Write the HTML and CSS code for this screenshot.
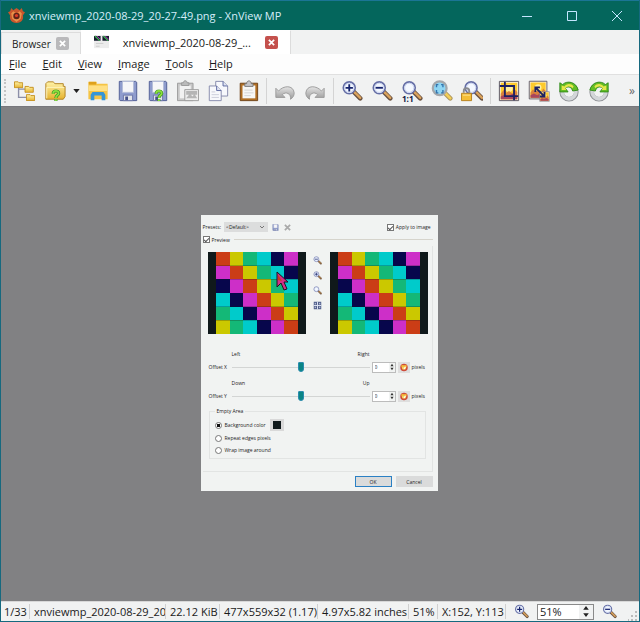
FILE: index.html
```html
<!DOCTYPE html>
<html lang="en">
<head>
    <meta charset="UTF-8">
    <meta name="viewport" content="width=device-width, initial-scale=1.0">
    <title>xnviewmp_2020-08-29_20-27-49.png - XnView MP</title>
    <link rel="stylesheet" href="styles.css">
</head>
<body>
    <!-- shared icon shapes -->
    <svg class="defs" width="0" height="0" aria-hidden="true">
        <defs>
            <linearGradient id="gold" x1="0" y1="0" x2="0" y2="1">
                <stop offset="0" stop-color="#fff3a8"/>
                <stop offset="1" stop-color="#e6b22e"/>
            </linearGradient>
            <linearGradient id="steel" x1="0" y1="0" x2="0" y2="1">
                <stop offset="0" stop-color="#e4e4e4"/>
                <stop offset="1" stop-color="#9a9a9a"/>
            </linearGradient>
        </defs>
        <symbol id="lens" viewBox="0 0 24 24">
            <path d="M14 13l7 7" stroke="#6b5240" stroke-width="5" stroke-linecap="round"/>
            <path d="M15 13.500l6 6" stroke="#dba35c" stroke-width="2.500" stroke-linecap="round"/>
            <circle cx="9" cy="8.500" r="6.500" fill="#f4f8ff" stroke="#666fa6" stroke-width="1.800"/>
            <circle cx="9" cy="8.500" r="5" fill="none" stroke="#c5d0ee"/>
        </symbol>
        <symbol id="zoom-in" viewBox="0 0 24 24">
            <use href="#lens"/>
            <path d="M5 8.500h8M9 4.500v8" stroke="#17246e" stroke-width="2"/>
        </symbol>
        <symbol id="zoom-out" viewBox="0 0 24 24">
            <use href="#lens"/>
            <path d="M5 8.500h8" stroke="#17246e" stroke-width="2"/>
        </symbol>
        <symbol id="floppy" viewBox="0 0 24 24">
            <path d="M2.500 1.500h18l1 1v20h-18l-1-1z" fill="#8f9ccd" stroke="#4d5a92"/>
            <path d="M6 1.500h12v12H6z" fill="#f6f6f8" stroke="#b4bcd8"/>
            <path d="M7 16.500h10v6H7z" fill="#e3e5ea" stroke="#6873a6"/>
            <path d="M9 18h3v4H9z" fill="#46518a"/>
        </symbol>
        <symbol id="question" viewBox="0 0 12 14">
            <path d="M3 5c0-4 6-4 6-.5C9 7 6 6.500 6 9.500M6 11v2" fill="none" stroke="#3a8f24" stroke-width="3.400"/>
            <path d="M3 5c0-4 6-4 6-.5C9 7 6 6.500 6 9.500M6 11v2" fill="none" stroke="#8be03c" stroke-width="2"/>
        </symbol>
        <symbol id="picture" viewBox="0 0 24 24">
            <path d="M1.500 1.500h21v21h-21z" fill="#f8f0e0" stroke="#55505c"/>
            <path d="M3 3h18v18H3z" fill="#fdca2c"/>
            <circle cx="12" cy="9" r="4" fill="#fff0a0"/>
            <path d="M3 15l3-4 3 3 3-2 4 3 2-5 3 3v8H3z" fill="#d9803c"/>
            <path d="M3 18l4-2 4 2 5-3 5 3v3H3z" fill="#a8455e"/>
        </symbol>
        <symbol id="rotate" viewBox="0 0 24 24">
            <circle cx="12" cy="13" r="8" fill="none" stroke="#8e9195" stroke-width="5"/>
            <circle cx="12" cy="13" r="7.500" fill="none" stroke="#d3d6d9" stroke-width="4"/>
            <path d="M22 11C20 2 10 0 5 5L2 3v10h9L8 9c3-3 7-1 8 3z" fill="#64bd24" stroke="#2f8a19"/>
            <path d="M17 7C14 3 9 4 7 7L4 6v5h5L8 9c3-3 6-2 8 0z" fill="#e5e54a"/>
        </symbol>
        <symbol id="undo" viewBox="0 0 24 24">
            <path d="M2 9l3 3c5-6 16-7 17 2 0 3-1 5-4 7 1-6-5-9-9-5l3 3H2z" fill="url(#steel)" stroke="#999"/>
        </symbol>
        <symbol id="mini-folder" viewBox="0 0 10 8">
            <path d="M.5 1h4l1 1h4v5.500h-9z" fill="url(#gold)" stroke="#c38c19"/>
        </symbol>
        <symbol id="refresh" viewBox="0 0 12 12">
            <circle cx="6" cy="6" r="4" fill="#f6d25c" stroke="#cf4b3a" stroke-width="2"/>
            <path d="M2 5l1-3 3 2 3-2 1 3z" fill="#f2b632"/>
            <path d="M6 8l2-3" stroke="#fff" stroke-width="1.500"/>
        </symbol>
        <symbol id="strip" viewBox="0 0 11 1">
            <path d="M0 0h1v1H0zM6 0h1v1H6z" fill="#cbc800"/>
            <path d="M1 0h1v1H1zM7 0h1v1H7z" fill="#14b877"/>
            <path d="M2 0h1v1H2zM8 0h1v1H8z" fill="#00cbcb"/>
            <path d="M3 0h1v1H3zM9 0h1v1H9z" fill="#07064c"/>
            <path d="M4 0h1v1H4zM10 0h1v1h-1z" fill="#cd2fc8"/>
            <path d="M5 0h1v1H5z" fill="#cb3d16"/>
        </symbol>
        <symbol id="checker" viewBox="0 0 6 6">
            <use href="#strip" x="-5" y="0" width="11" height="1"/>
            <use href="#strip" x="-4" y="1" width="11" height="1"/>
            <use href="#strip" x="-3" y="2" width="11" height="1"/>
            <use href="#strip" x="-2" y="3" width="11" height="1"/>
            <use href="#strip" x="-1" y="4" width="11" height="1"/>
            <use href="#strip" x="0" y="5" width="11" height="1"/>
        </symbol>
    </svg>

    <div class="window">
        <header class="titlebar">
            <svg class="app-icon" viewBox="0 0 16 16">
                <path d="M8 15C3 15 1 11 2 8L0 5l2-1 1-3 2 2 3-2 3 2 2-2 1 3 2 1-2 3c1 3-1 7-6 7z" fill="#c9562c"/>
                <path d="M3 6l2-2 3 2 3-2 2 2-1 5-4 3-4-3z" fill="#e8914a"/>
                <circle cx="8" cy="8.500" r="3" fill="#5e2118"/>
                <circle cx="8" cy="8" r="1.500" fill="#e03c28"/>
            </svg>
            <h1>xnviewmp_2020-08-29_20-27-49.png - XnView MP</h1>
            <button class="win-btn" aria-label="Minimize"><svg viewBox="0 0 12 12"><path d="M1 6.500h10"/></svg></button>
            <button class="win-btn" aria-label="Maximize"><svg viewBox="0 0 12 12"><path d="M1.500 1.500h9v9h-9z"/></svg></button>
            <button class="win-btn" aria-label="Close"><svg viewBox="0 0 12 12"><path d="M1 1l10 10M11 1L1 11"/></svg></button>
        </header>

        <div class="tabs">
            <div class="tab">
                <span>Browser</span>
                <button class="tab-close" aria-label="Close Browser"><svg viewBox="0 0 8 8"><path d="M1 1l6 6M7 1L1 7"/></svg></button>
            </div>
            <div class="tab active">
                <svg class="thumb" viewBox="0 0 16 16">
                    <path d="M0 0h16v14H0z" fill="#ececec"/>
                    <path d="M0 1h7v5H0zM9 1h7v5H9z" fill="#151a2c"/>
                    <path d="M1 1l5 5M10 1l5 5" stroke="#3fae54" stroke-width="1.500"/>
                    <path d="M3 1l4 4M12 1l4 4" stroke="#b53cc0"/>
                    <path d="M2 9h8M2 12h4" stroke="#ccc"/>
                </svg>
                <span class="tab-name">xnviewmp_2020-08-29_...</span>
                <button class="tab-close red" aria-label="Close image"><svg viewBox="0 0 8 8"><path d="M1 1l6 6M7 1L1 7"/></svg></button>
            </div>
        </div>

        <nav class="menu">
            <a href="#"><u>F</u>ile</a>
            <a href="#"><u>E</u>dit</a>
            <a href="#"><u>V</u>iew</a>
            <a href="#"><u>I</u>mage</a>
            <a href="#"><u>T</u>ools</a>
            <a href="#"><u>H</u>elp</a>
        </nav>

        <div class="toolbar">
            <span class="grip"></span>
            <button class="tool" aria-label="Browser"><svg viewBox="0 0 24 24">
                <path d="M5 8v11h10M5 10h8" fill="none" stroke="#8c8fa8" stroke-width="1.500"/>
                <use href="#mini-folder" x="0" y="1" width="10" height="8"/>
                <use href="#mini-folder" x="11" y="6" width="11" height="8"/>
                <use href="#mini-folder" x="13" y="15" width="10" height="8"/>
            </svg></button>
            <button class="tool" aria-label="Open"><svg viewBox="0 0 24 24">
                <path d="M2 21V4l2-2h6l2 2h9v3h2v11l-2 3z" fill="url(#gold)" stroke="#b07f1c"/>
                <path d="M3 20V8h19" fill="none" stroke="#fff6c4"/>
                <use href="#question" x="7" y="10" width="12" height="14"/>
            </svg></button>
            <button class="drop" aria-label="Recent files"><svg viewBox="0 0 8 5"><path d="M0 0h8L4 5z" fill="#222"/></svg></button>
            <button class="tool" aria-label="Explorer"><svg viewBox="0 0 24 24">
                <path d="M1.500 2h9v2h12v17h-21z" fill="#f5c445"/>
                <path d="M2 2h8v3H2z" fill="#dea11c"/>
                <path d="M2 6h20v6H2z" fill="#ffe084"/>
                <path d="M4 22v-6l2-3h12l2 3v6h-4v-5H8v5z" fill="#3595d6"/>
            </svg></button>
            <button class="tool" aria-label="Save"><svg viewBox="0 0 24 24"><use href="#floppy"/></svg></button>
            <button class="tool" aria-label="Save as"><svg viewBox="0 0 24 24">
                <use href="#floppy"/>
                <use href="#question" x="7" y="10" width="12" height="14"/>
            </svg></button>
            <button class="tool" aria-label="Paste"><svg viewBox="0 0 24 24">
                <path d="M.5 3.500h17v19H.5z" fill="#c8c8c8" stroke="#999"/>
                <path d="M3 6h12v14H3z" fill="#f2f2f2"/>
                <path d="M5 6V3h2c0-3 4-3 4 0h2v3z" fill="#bbb" stroke="#999"/>
                <path d="M8.500 10.500h15v12h-15z" fill="#eee" stroke="#999"/>
                <path d="M10 20l4-5 3 3 2-3 3 5zM10 12h12v4H10z" fill="#b5b5b5"/>
            </svg></button>
            <button class="tool" aria-label="Copy"><svg viewBox="0 0 24 24">
                <path d="M9.500 1.500h8l5 5v11h-13z" fill="#f7f8fc" stroke="#8287aa"/>
                <path d="M17.500 1.500v5h5" fill="#dfe3f2" stroke="#55639d"/>
                <path d="M2.500 6.500h8l5 5v11h-13z" fill="#f7f8fc" stroke="#8287aa"/>
                <path d="M10.500 6.500v5h5" fill="#dfe3f2" stroke="#55639d"/>
                <path d="M5 13h4M5 16h8M5 19h8" stroke="#c8cbd8"/>
            </svg></button>
            <button class="tool" aria-label="Clipboard"><svg viewBox="0 0 24 24">
                <path d="M3.500 3.500h19v19h-19z" fill="#b06f24" stroke="#6b3f16"/>
                <path d="M6 6h14v14H6z" fill="#f7f7f5"/>
                <path d="M8.500 7V4h2c0-4 5-4 5 0h2v3z" fill="#c4c4c8" stroke="#777"/>
                <path d="M8 11h9M8 14h10M8 17h7" stroke="#d2d2d2"/>
            </svg></button>
            <span class="sep"></span>
            <button class="tool" aria-label="Undo"><svg viewBox="0 0 24 24"><use href="#undo"/></svg></button>
            <button class="tool" aria-label="Redo"><svg viewBox="0 0 24 24"><use href="#undo" transform="translate(24 0) scale(-1 1)"/></svg></button>
            <span class="sep"></span>
            <button class="tool" aria-label="Zoom in"><svg viewBox="0 0 24 24"><use href="#zoom-in"/></svg></button>
            <button class="tool" aria-label="Zoom out"><svg viewBox="0 0 24 24"><use href="#zoom-out"/></svg></button>
            <button class="tool" aria-label="Zoom 100%"><svg viewBox="0 0 24 24">
                <use href="#lens"/>
                <text x="1" y="24" class="ratio">1:1</text>
            </svg></button>
            <button class="tool" aria-label="Fit image"><svg viewBox="0 0 24 24">
                <path d="M15 14l6 6" stroke="#a9925c" stroke-width="5" stroke-linecap="round"/>
                <path d="M15 14l6 6" stroke="#f2ce58" stroke-width="3" stroke-linecap="round"/>
                <circle cx="9.500" cy="9" r="7.500" fill="#8fd6f4" stroke="#a4a8ac" stroke-width="2.500"/>
                <path d="M6 8V5h2M11 5h2v3M13 11v3h-2M8 14H6v-3" fill="none" stroke="#3475ae" stroke-width="1.500"/>
            </svg></button>
            <button class="tool" aria-label="Lock zoom"><svg viewBox="0 0 24 24">
                <use href="#lens" x="2" y="0"/>
                <path d="M3 14v-2c0-4 6-4 6 0v2" fill="none" stroke="#8b8c90" stroke-width="2"/>
                <path d="M.5 14.500h11v8H.5z" fill="#f4bd36" stroke="#b27c18"/>
                <path d="M2 16.500h8" stroke="#ffe69a"/>
            </svg></button>
            <span class="sep"></span>
            <button class="tool" aria-label="Crop"><svg viewBox="0 0 24 24">
                <use href="#picture"/>
                <path d="M7.500 2v15.500H22M2 6.500h15.500V22" fill="none" stroke="#1d2163" stroke-width="2"/>
            </svg></button>
            <button class="tool" aria-label="Resize"><svg viewBox="0 0 24 24">
                <use href="#picture" x="0" y="0" width="22" height="22"/>
                <use href="#picture" x="12" y="12" width="12" height="12"/>
                <path d="M9 9l8 8M8 13V8h5M18 13v5h-5" fill="none" stroke="#1d2163" stroke-width="2"/>
            </svg></button>
            <button class="tool" aria-label="Rotate left"><svg viewBox="0 0 24 24"><use href="#rotate"/></svg></button>
            <button class="tool" aria-label="Rotate right"><svg viewBox="0 0 24 24"><use href="#rotate" transform="translate(24 0) scale(-1 1)"/></svg></button>
            <button class="more" aria-label="More tools">»</button>
        </div>

        <main class="canvas">
            <section class="dialog">
                <div class="presets">
                    <label for="preset">Presets:</label>
                    <div class="select">
                        <select id="preset"><option>&lt;Default&gt;</option></select>
                        <svg viewBox="0 0 6 4"><path d="M1 1l2 2 2-2"/></svg>
                    </div>
                    <svg class="mini" viewBox="0 0 24 24"><use href="#floppy"/></svg>
                    <svg class="mini" viewBox="0 0 8 8"><path d="M1 1l6 6M7 1L1 7" stroke="#aaa" stroke-width="2"/></svg>
                    <label class="apply"><input type="checkbox" checked> Apply to image</label>
                </div>
                <div class="preview-head"><label><input type="checkbox" checked> Preview</label></div>
                <div class="frame">
                    <div class="previews">
                        <div class="preview">
                            <svg viewBox="0 0 6 6"><use href="#checker"/></svg>
                            <svg class="pointer" viewBox="0 0 12 20"><path d="M1 1v15l4-4 3 7 3-1-3-7h4z" fill="#d32f86" stroke="#1c1420"/><path d="M2 4v5l4 1z" fill="#cb3d16"/></svg>
                        </div>
                        <div class="preview-tools">
                            <button aria-label="Preview zoom out"><svg viewBox="0 0 24 24"><use href="#zoom-out"/></svg></button>
                            <button aria-label="Preview zoom in"><svg viewBox="0 0 24 24"><use href="#zoom-in"/></svg></button>
                            <button aria-label="Preview zoom 100%"><svg viewBox="0 0 24 24"><use href="#lens"/></svg></button>
                            <button aria-label="Preview fit"><svg viewBox="0 0 24 24"><path d="M2 2h20v20H2z" fill="#53608c"/><path d="M12 2v20M2 12h20M6 5v4M18 5v4M6 15v4M18 15v4" stroke="#dfe4f4" stroke-width="2.500"/></svg></button>
                        </div>
                        <div class="preview"><svg viewBox="0 0 6 6"><use href="#checker"/></svg></div>
                    </div>

                    <div class="offset">
                        <div class="ends"><span>Left</span><span>Right</span></div>
                        <label for="offset-x">Offset X</label>
                        <input class="slider" id="offset-x" type="range" min="-100" max="100" value="0">
                        <div class="spin"><input type="text" value="0" aria-label="Offset X pixels"><svg viewBox="0 0 6 10"><path d="M1 4l2-3 2 3zM1 6l2 3 2-3z"/></svg></div>
                        <button class="reset" aria-label="Reset X"><svg viewBox="0 0 12 12"><use href="#refresh"/></svg></button>
                        <span>pixels</span>
                    </div>
                    <div class="offset">
                        <div class="ends"><span>Down</span><span>Up</span></div>
                        <label for="offset-y">Offset Y</label>
                        <input class="slider" id="offset-y" type="range" min="-100" max="100" value="0">
                        <div class="spin"><input type="text" value="0" aria-label="Offset Y pixels"><svg viewBox="0 0 6 10"><path d="M1 4l2-3 2 3zM1 6l2 3 2-3z"/></svg></div>
                        <button class="reset" aria-label="Reset Y"><svg viewBox="0 0 12 12"><use href="#refresh"/></svg></button>
                        <span>pixels</span>
                    </div>

                    <fieldset class="empty-area">
                        <legend>Empty Area</legend>
                        <div class="choice first">
                            <label><input type="radio" name="area" checked> Background color</label>
                            <button class="swatch" aria-label="Pick color"></button>
                        </div>
                        <div class="choice"><label><input type="radio" name="area"> Repeat edges pixels</label></div>
                        <div class="choice"><label><input type="radio" name="area"> Wrap image around</label></div>
                    </fieldset>
                </div>
                <div class="actions">
                    <button class="ok">OK</button>
                    <button>Cancel</button>
                </div>
            </section>
        </main>

        <footer class="status">
            <span class="cell index">1/33</span>
            <span class="cell name">xnviewmp_2020-08-29_20</span>
            <span class="cell size">22.12 KiB</span>
            <span class="cell dims">477x559x32 (1.17)</span>
            <span class="cell inches">4.97x5.82 inches</span>
            <span class="cell percent">51%</span>
            <span class="cell coords">X:152, Y:113</span>
            <button class="zoom-btn" aria-label="Zoom in"><svg viewBox="0 0 24 24"><use href="#zoom-in"/></svg></button>
            <div class="zoom-box">
                <input type="text" value="51%" aria-label="Zoom">
                <svg viewBox="0 0 12 14"><path d="M3 5l3-4 3 4zM3 9l3 4 3-4z"/></svg>
            </div>
            <button class="zoom-btn" aria-label="Zoom out"><svg viewBox="0 0 24 24"><use href="#zoom-out"/></svg></button>
            <svg class="resize" viewBox="0 0 10 10"><path d="M7 0h2v2H7zM7 4h2v2H7zM7 8h2v2H7zM3 4h2v2H3zM3 8h2v2H3zM0 8h1v2H0z" fill="#bbb"/></svg>
        </footer>
    </div>
</body>
</html>
```
FILE: styles.css
```css
* {
    box-sizing: border-box;
}
body {
    margin: 0;
    font-family: "Open Sans", "Noto Sans", sans-serif;
    font-size: 11px;
    color: #1a1a1a;
}
button, input, select {
    font: inherit;
    color: inherit;
    margin: 0;
    padding: 0;
    border: none;
    background: none;
}
svg {
    display: block;
    fill: none;
}
.defs {
    position: absolute;
}
.window {
    display: flex;
    flex-direction: column;
    min-height: 100vh;
    border: 1px solid #16697f;
    border-top: none;
    background: #f1f2f2;
}

/* title bar */
.titlebar {
    display: flex;
    align-items: center;
    height: 30px;
    padding-left: 7px;
    background: #04665c;
    border-top: 1px solid #1b7595;
    color: #d4edfa;
}
.app-icon {
    width: 17px;
    height: 17px;
    margin-right: 4px;
}
.titlebar h1 {
    flex: 1;
    margin: 0;
    font-size: 11px;
    font-weight: normal;
}
.win-btn {
    display: flex;
    justify-content: center;
    width: 45px;
}
.win-btn svg {
    width: 12px;
    height: 12px;
    stroke: #c4e6ff;
}

/* tabs */
.tabs {
    display: flex;
    align-items: flex-end;
    height: 24px;
}
.tab {
    display: flex;
    align-items: center;
    height: 22px;
    gap: 5px;
    padding: 0 11px 0 10px;
    border: 1px solid #dcdcdc;
    border-bottom: none;
    font-size: 10px;
}
.tab.active {
    height: 24px;
    padding: 0 12px;
    gap: 14px;
    background: #fff;
    border-color: #fff #dcdcdc #fff #fff;
    font-size: 11px;
}
.tab-close {
    display: flex;
    align-items: center;
    justify-content: center;
    width: 13px;
    height: 13px;
    border-radius: 2px;
    background: #b9b9bb;
}
.tab-close.red {
    background: #c4514d;
}
.tab-close svg {
    width: 7px;
    height: 7px;
    stroke: #fff;
    stroke-width: 2;
}
.thumb {
    width: 15px;
    height: 15px;
}

/* menu */
.menu {
    display: flex;
    align-items: center;
    gap: 16px;
    height: 20px;
    padding: 0 0 2px 8px;
    background: #fdfdfd;
}
.menu a {
    color: inherit;
    text-decoration: none;
}

/* toolbar */
.toolbar {
    display: flex;
    align-items: center;
    height: 33px;
    padding-left: 3px;
    border-top: 1px solid #e0e0e0;
    border-bottom: 1px solid #77777c;
}
.grip {
    width: 6px;
    height: 24px;
    border-left: 2px dotted #c4c4c4;
}
.tool {
    display: flex;
    justify-content: center;
    width: 30px;
}
.tool svg {
    width: 22px;
    height: 22px;
}
.drop {
    display: flex;
    justify-content: center;
    width: 13px;
}
.drop svg {
    width: 7px;
    height: 4px;
}
.sep {
    width: 1px;
    height: 26px;
    margin: 0 3px;
    background: #d4d4d4;
}
.ratio {
    font: bold 9px "Open Sans", sans-serif;
    fill: #12183f;
}
.more {
    margin: 0 4px 0 auto;
    font-size: 12px;
    color: #666;
}

/* image area */
.canvas {
    flex: 1;
    display: flex;
    align-items: center;
    justify-content: center;
    padding: 0 2px 2px 0;
    background: #818183;
}
.dialog {
    width: 237px;
    padding: 6px 5px 4px 2px;
    background: #f1f3f2;
    font-size: 5px;
    line-height: 8px;
    color: #222;
}
.dialog label {
    display: flex;
    align-items: center;
    gap: 2px;
}
.presets {
    display: flex;
    align-items: center;
    gap: 3px;
    height: 12px;
}
.select {
    display: flex;
    align-items: center;
    width: 44px;
    height: 10px;
    padding: 0 3px 0 2px;
    background: #dcdddd;
}
.select select {
    appearance: none;
    flex: 1;
    height: 10px;
}
.select svg {
    width: 6px;
    height: 4px;
    stroke: #777;
}
.mini {
    width: 7px;
    height: 7px;
    margin-left: 1px;
}
.mini + .mini {
    margin-left: 2px;
}
.presets .apply {
    margin: 0 2px 0 auto;
}
.dialog input[type="checkbox"],
.dialog input[type="radio"] {
    appearance: none;
    width: 7px;
    height: 7px;
    border: 1px solid #777;
    background: #fff;
}
.dialog input[type="checkbox"]:checked::after {
    content: "";
    display: block;
    width: 2px;
    height: 4px;
    margin: 0 0 0 1px;
    border: solid #555;
    border-width: 0 1px 1px 0;
    transform: rotate(45deg);
}
.dialog input[type="radio"] {
    border-radius: 50%;
}
.dialog input[type="radio"]:checked {
    background: radial-gradient(#111 40%, #fff 50%);
}
.preview-head {
    display: flex;
    align-items: center;
    gap: 4px;
    height: 13px;
}
.preview-head::after {
    content: "";
    flex: 1;
    height: 1px;
    background: #d6d4cc;
}
.frame {
    padding: 6px 4px 12px 5px;
    border: 1px solid #e2e4e3;
    border-width: 0 1px 1px 0;
}
.previews {
    display: flex;
    justify-content: space-between;
}
.preview {
    position: relative;
    width: 98px;
    height: 82px;
    padding: 0 8px;
    background: #10191b;
}
.preview svg {
    width: 82px;
    height: 82px;
    shape-rendering: crispEdges;
}
.preview .pointer {
    position: absolute;
    left: 68px;
    top: 19px;
    width: 12px;
    height: 20px;
    shape-rendering: auto;
}
.preview-tools {
    display: flex;
    flex-direction: column;
    gap: 6px;
    padding-top: 4px;
}
.preview-tools svg {
    width: 9px;
    height: 9px;
}
.offset {
    display: grid;
    grid-template-columns: 21px 1fr 24px 12px 16px;
    column-gap: 2px;
    row-gap: 3px;
    align-items: center;
    padding-left: 1px;
}
.previews + .offset {
    margin-top: 16px;
}
.ends {
    grid-column: 2;
    display: flex;
    justify-content: space-between;
}
.offset label {
    grid-column: 1;
}
.offset + .offset {
    margin-top: 6px;
}
.slider {
    appearance: none;
    width: 100%;
    height: 12px;
    background: linear-gradient(#d3d5d4, #d3d5d4) center / 100% 1px no-repeat;
}
.slider::-webkit-slider-thumb {
    appearance: none;
    width: 6px;
    height: 10px;
    border: 1px solid #2b8cae;
    border-radius: 1px 1px 3px 3px;
    background: #0a8585;
}
.spin {
    display: flex;
    align-items: center;
    height: 11px;
    border: 1px solid #bcbcbc;
}
.spin input {
    flex: 1;
    width: 10px;
    padding-left: 2px;
    height: 9px;
    background: #fff;
}
.spin svg {
    width: 6px;
    height: 8px;
    fill: #333;
}
.reset {
    display: flex;
    justify-content: center;
    padding: 1px;
    background: #dedede;
}
.reset svg {
    width: 10px;
    height: 9px;
}
.empty-area {
    margin: 5px 2px 0 1px;
    padding: 3px 4px 2px 5px;
    border: 1px solid #e2e4e3;
}
.empty-area legend {
    padding: 0 2px;
}
.choice {
    display: flex;
    align-items: center;
    gap: 4px;
    height: 12px;
}
.choice.first {
    height: 14px;
}
.choice label {
    gap: 3px;
}
.swatch {
    width: 14px;
    height: 12px;
    background: #10191b;
    border: 2px solid #d9d9d9;
    border-width: 2px 3px;
}
.actions {
    display: flex;
    justify-content: flex-end;
    gap: 4px;
    margin-top: 4px;
}
.actions button {
    width: 37px;
    height: 11px;
    background: #dadbdb;
}
.actions .ok {
    border: 1px solid #2a80c4;
}

/* status bar */
.status {
    display: flex;
    align-items: center;
    height: 20px;
    border-top: 1px solid #d8d8d8;
}
.cell {
    padding: 0 2px 0 4px;
    border-right: 1px solid #d0d0d0;
    white-space: nowrap;
    overflow: hidden;
}
.index {
    width: 29px;
    padding-left: 3px;
}
.name {
    width: 136px;
    padding-right: 0;
}
.size {
    width: 54px;
}
.dims {
    width: 98px;
}
.inches {
    width: 91px;
}
.percent {
    width: 29px;
}
.coords {
    width: 68px;
}
.zoom-btn {
    margin: 0 8px;
}
.zoom-btn svg {
    width: 15px;
    height: 15px;
}
.zoom-box {
    display: flex;
    align-items: center;
    width: 57px;
    height: 16px;
    border: 1px solid #8a8a8a;
}
.zoom-box input {
    flex: 1;
    width: 30px;
    height: 14px;
    padding-left: 2px;
    background: #fff;
}
.zoom-box svg {
    width: 14px;
    height: 13px;
    fill: #222;
}
.resize {
    width: 10px;
    height: 10px;
    margin: 0 1px 0 auto;
    align-self: flex-end;
}
```
